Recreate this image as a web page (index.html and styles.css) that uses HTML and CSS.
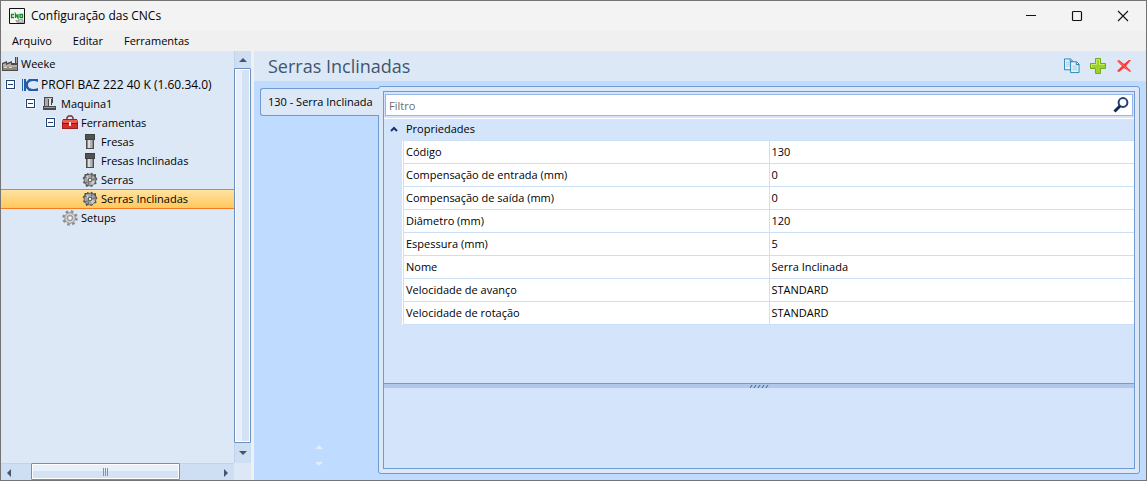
FILE: index.html
```html
<!DOCTYPE html>
<html lang="pt-BR">
<head>
<meta charset="utf-8">
<title>Configuração das CNCs</title>
<link rel="stylesheet" href="styles.css">
</head>
<body>
<svg class="defs" aria-hidden="true">
  <symbol id="mill" viewBox="0 0 16 16">
    <path d="M4 5h8v10H4z" fill="#4d4d4d"/><path d="M5 6h6v8H5z" fill="#8c8c8c"/><path d="M6 6h2v8H6z" fill="#dcdcdc"/><path d="M8 6h2v8H8z" fill="#b5b5b5"/>
    <path d="M3 0h10v6H3z" fill="#3d3f40"/><path d="M4 1h8v4H4z" fill="#505354"/>
  </symbol>
  <symbol id="saw" viewBox="0 0 16 16">
    <path d="M5 1l3 1 2-1.500 1 2 3-.5 0 3 1.500 2-1.500 2 .5 3-3 .5-1.500 2.500-3-1-3 1-.5-3-2.500-1 1-3-1.500-2 2-2 0-2 2.500 0z" fill="#555"/>
    <circle cx="8" cy="8" r="5.600" fill="#a6a6a6"/>
    <path d="M8 8L3 6l2-3zM8 8l5 2-3 3z" fill="#cfcfcf"/><path d="M3 11l2.500-1M10 3l-.5 2.500M13 7l-2.500.5M6 13l.5-2.500M3 5l2 1" stroke="#5e5e5e"/>
    <circle cx="8" cy="8" r="2.300" fill="#5d5d5d"/><circle cx="8" cy="8" r="1.200" fill="#f4f4f4"/>
  </symbol>
</svg>
<div class="window">
  <header class="titlebar">
    <svg class="icon app-icon" viewBox="0 0 16 16"><path d="M.5.5h15v15H.5z" fill="#f5f8f5" stroke="#111"/><path d="M5 6.500H2.500v3H5M6.500 10V6l2.500 4V6M11 10V6.500h2.500v3H11" fill="none" stroke="#128a25" stroke-width="1.300"/><path d="M6 12h3l1-1 4 0 1 4H8z" fill="#a5aaa5"/><path d="M10 13h3" stroke="#eee"/></svg>
    <h1 class="title">Configuração das CNCs</h1>
    <button class="caption" aria-label="Minimizar"><svg viewBox="0 0 12 12"><path d="M1 5.500h10" stroke="#111"/></svg></button>
    <button class="caption" aria-label="Maximizar"><svg viewBox="0 0 12 12"><rect x="1.500" y="1.500" width="9" height="9" rx="1" fill="none" stroke="#111" stroke-width="1.200"/></svg></button>
    <button class="caption" aria-label="Fechar"><svg viewBox="0 0 12 12"><path d="M1 1l10 10M11 1L1 11" stroke="#111" stroke-width="1.100"/></svg></button>
  </header>
  <nav class="menu">
    <button>Arquivo</button><button>Editar</button><button>Ferramentas</button>
  </nav>
  <div class="content">
    <aside class="side">
      <ul class="tree">
        <li class="node root"><svg class="icon" viewBox="0 0 16 16"><path d="M0 15V7l5-2v2l5-2v2h3V1h3v14z" fill="#4d4a47"/><path d="M1 8l3-1v2l5-2v2h6v2H1z" fill="#b2aea6"/><path d="M1 11h14v3H1z" fill="#8c8881"/><path d="M2 11h3v1H2zM7 11h3v1H7z" fill="#ddd"/><path d="M14 1h1v6h-1z" fill="#aaa"/></svg>Weeke</li>
        <li class="node l1 machine"><button class="expander" aria-label="Recolher"></button><svg class="icon" viewBox="0 0 16 16"><path d="M0 2h1v12H0zM2 2h2v3l3-3h9v3c-4-2-10-1-10 3s6 5 10 3v3H7l-3-3v3H2z" fill="#245da5"/></svg>PROFI BAZ 222 40 K (1.60.34.0)</li>
        <li class="node l2"><button class="expander" aria-label="Recolher"></button><svg class="icon" viewBox="0 0 16 16"><path d="M2 1h9v6H9V3H7v7h7v4H1v-4h1z" fill="#4a4a4a"/><path d="M3 2h3v8H3z" fill="#aaa"/><path d="M6 2h4v1H6z" fill="#ccc"/><path d="M2 11h11v1H2z" fill="#999"/><path d="M8 3h1v4H8z" fill="#eee"/><path d="M9 7h1v2H9z" fill="#333"/></svg>Maquina1</li>
        <li class="node l3"><button class="expander" aria-label="Recolher"></button><svg class="icon" viewBox="0 0 16 16"><path d="M5 4V2.500L6.500 1h3L11 2.500V4" fill="none" stroke="#6a3434" stroke-width="1.400"/><path d="M1 4h14l1 3v7H0V7z" fill="#9e1f1d"/><path d="M1 5h14v3H1z" fill="#f05b51"/><path d="M1 9h14v4H1z" fill="#d52e29"/><path d="M0 8h16v1H0z" fill="#71201e"/><path d="M7 7h2v4H7z" fill="#eee"/></svg>Ferramentas</li>
        <li class="node l4"><svg class="icon"><use href="#mill"/></svg>Fresas</li>
        <li class="node l4"><svg class="icon"><use href="#mill"/></svg>Fresas Inclinadas</li>
        <li class="node l4"><svg class="icon"><use href="#saw"/></svg>Serras</li>
        <li class="node l4 selected"><svg class="icon"><use href="#saw"/></svg>Serras Inclinadas</li>
        <li class="node l3b"><svg class="icon" viewBox="0 0 16 16"><circle cx="8" cy="8" r="6.500" fill="none" stroke="#8b8b8b" stroke-width="2.400" stroke-dasharray="2.553 2.553"/><circle cx="8" cy="8" r="5.300" fill="#d2d2d2" stroke="#999"/><circle cx="8" cy="8" r="2.800" fill="#bbb" stroke="#999"/><circle cx="8" cy="8" r="1.500" fill="#f8f8f8"/></svg>Setups</li>
      </ul>
      <div class="vscroll">
        <button class="arrow" aria-label="Rolar para cima"><svg viewBox="0 0 8 4"><path d="M0 4h8L4 0z"/></svg></button>
        <div class="vthumb"></div>
        <button class="arrow last" aria-label="Rolar para baixo"><svg viewBox="0 0 8 4"><path d="M0 0h8L4 4z"/></svg></button>
      </div>
      <div class="hscroll">
        <button class="arrow" aria-label="Rolar para a esquerda"><svg class="tall" viewBox="0 0 4 8"><path d="M4 0v8L0 4z"/></svg></button>
        <div class="htrack"><div class="hthumb"><i></i><i></i><i></i></div></div>
        <button class="arrow" aria-label="Rolar para a direita"><svg class="tall" viewBox="0 0 4 8"><path d="M0 0v8l4-4z"/></svg></button>
      </div>
    </aside>
    <main class="main">
      <div class="head">
        <h2>Serras Inclinadas</h2>
        <button class="tool" aria-label="Copiar"><svg viewBox="0 0 17 16"><path d="M.5.500H7L9.500 3v9h-9z" fill="#e4f3fa" stroke="#2482b8"/><path d="M2 4h5M2 6h5M2 8h5" stroke="#9dcbe1"/><path d="M7 3.500h6.500l2.500 2.500v9H7z" fill="#e4f3fa" stroke="#2482b8"/><path d="M13 4v2.500h3M6.500 1v2h2" fill="none" stroke="#1476ad"/><path d="M9 8h5M9 10h5M9 12h5" stroke="#9dcbe1"/></svg></button>
        <button class="tool" aria-label="Adicionar"><svg viewBox="0 0 16 16"><path d="M5.500.500h5v5h5v5h-5v5h-5v-5h-5v-5h5z" fill="#9bd22b" stroke="#78a91c"/><path d="M6.500 6.500v-5h3v5h5M1.500 9V6.500h5" fill="none" stroke="#c7ec68"/></svg></button>
        <button class="tool" aria-label="Excluir"><svg viewBox="0 0 16 16"><path d="M1 3l2-1 5 4 5-4 2 0-5 6 5 5-1 1-6-4-5 4-2-1 5-5z" fill="#ff3434"/><path d="M2 3l6 5 5 5" fill="none" stroke="#ff6d68"/></svg></button>
      </div>
      <div class="body">
        <div class="tabs">
          <button class="tab">130 - Serra Inclinada</button>
          <div class="pager">
            <svg viewBox="0 0 8 4"><path d="M0 4h8L4 0z"/></svg>
            <svg viewBox="0 0 8 4"><path d="M0 0h8L4 4z"/></svg>
          </div>
        </div>
        <section class="page">
          <div class="grid">
            <label class="filter"><input type="text" placeholder="Filtro" aria-label="Filtro"><svg viewBox="0 0 16 16"><circle cx="10" cy="5.500" r="4.400" fill="none" stroke="#24426f" stroke-width="2"/><path d="M7 9l-5.500 5.500" stroke="#102a56" stroke-width="3"/></svg></label>
            <div class="props">
              <button class="category"><svg viewBox="0 0 8 6"><path d="M1 5l3-3 3 3" fill="none" stroke="#17366b" stroke-width="2"/></svg>Propriedades</button>
              <table>
                <tr><th scope="row">Código</th><td>130</td></tr>
                <tr><th scope="row">Compensação de entrada (mm)</th><td>0</td></tr>
                <tr><th scope="row">Compensação de saída (mm)</th><td>0</td></tr>
                <tr><th scope="row">Diâmetro (mm)</th><td>120</td></tr>
                <tr><th scope="row">Espessura (mm)</th><td>5</td></tr>
                <tr><th scope="row">Nome</th><td>Serra Inclinada</td></tr>
                <tr><th scope="row">Velocidade de avanço</th><td>STANDARD</td></tr>
                <tr><th scope="row">Velocidade de rotação</th><td>STANDARD</td></tr>
              </table>
            </div>
            <div class="splitter"><svg viewBox="0 0 19 3"><path d="M0 3l2-3M4 3l2-3M8 3l2-3M12 3l2-3M16 3l2-3" stroke="#2e69b5"/></svg></div>
            <div class="description"></div>
          </div>
        </section>
      </div>
    </main>
  </div>
</div>
</body>
</html>
```
FILE: styles.css
```css
* { box-sizing: border-box; }
body { margin: 0; font: 11px/16px "Open Sans", "Noto Sans", sans-serif; color: #000; }
button { border: 0; padding: 0; background: none; font: inherit; color: inherit; }
svg { display: block; flex: none; }
.defs { display: none; }
.icon { width: 16px; height: 16px; }
.window { height: 100vh; display: flex; flex-direction: column; border: 1px solid #747474; background: #f0f0f0; }

.titlebar { height: 30px; flex: none; display: flex; align-items: center; background: #f3f3f3; padding-left: 8px; }
.title { flex: 1; margin: 0 0 0 6px; font-size: 12px; font-weight: 400; }
.caption { width: 46px; height: 30px; display: flex; align-items: center; justify-content: center; }
.caption svg { width: 12px; height: 12px; }
.menu { height: 20px; flex: none; display: flex; gap: 21px; padding-left: 11px; }

.content { flex: 1; min-height: 0; display: flex; gap: 3px; }
.side { width: 250px; flex: none; display: grid; grid-template: 1fr 17px / 1fr 17px; background: #dde8f6; }
.tree { margin: 0; padding: 3px 0 0; list-style: none; overflow: hidden; white-space: nowrap; }
.node { height: 19px; display: flex; align-items: center; gap: 3px; }
.root { height: 21px; padding: 0 0 2px 1px; }
.machine { font-size: 12px; }
.l1 { padding-left: 5px; }
.l2 { padding-left: 25px; }
.l3 { padding-left: 45px; }
.l3b { padding-left: 61px; }
.l4 { padding-left: 81px; }
.selected { background: linear-gradient(#ffe3a6, #ffc95c); box-shadow: inset 0 1px #f47b20, 0 1px #f47b20; }
.expander { width: 9px; height: 9px; border: 1px solid #24406f; background: linear-gradient(#24406f, #24406f) center / 5px 1px no-repeat #fff; margin-right: 4px; box-shadow: 0 0 0 1px #eef4fc; }

.vscroll { display: flex; flex-direction: column; background: #cfdff3; border-left: 1px solid #c0d3ec; }
.arrow { width: 16px; height: 17px; flex: none; display: flex; align-items: center; justify-content: center; }
.arrow.last { height: 20px; }
.arrow svg { width: 8px; height: 4px; fill: #46546f; }
.arrow .tall { width: 4px; height: 8px; }
.vthumb { flex: 1; margin-left: -1px; border: 1px solid #6f8fbe; border-radius: 1px; box-shadow: inset 0 0 0 1px #fff; background: linear-gradient(90deg, #e8f1fb 45%, #d3e2f4 45%); }
.hscroll { display: flex; background: #cfdff3; border-top: 1px solid #c0d3ec; }
.htrack { flex: 1; padding-left: 14px; margin-top: -1px; }
.hthumb { width: 149px; height: 17px; display: flex; align-items: center; justify-content: center; gap: 1px; border: 1px solid #6f8fbe; border-radius: 1px; box-shadow: inset 0 0 0 1px #fff; background: linear-gradient(#e8f1fb 48%, #d3e2f4 48%); }
.hthumb i { width: 1px; height: 8px; background: #6f95c9; }

.main { flex: 1; min-width: 0; display: flex; flex-direction: column; background: #bfdbff; }
.head { height: 30px; flex: none; display: flex; align-items: center; gap: 10px; padding: 0 14px; background: #dde8f6; }
.head h2 { flex: 1; margin: 0; font-size: 18px; line-height: 28px; font-weight: 400; color: #405670; }
.tool svg { width: 16px; height: 16px; }
.body { flex: 1; min-height: 0; display: flex; padding: 5px 6px 6px; }
.tabs { width: 118px; flex: none; display: flex; flex-direction: column; justify-content: space-between; align-items: flex-start; padding: 2px 0 8px; }
.tab { position: relative; width: 119px; height: 28px; padding-left: 7px; text-align: left; white-space: nowrap; background: #dde8f6; border: 1px solid #6f9ad3; border-right: 0; border-radius: 3px 0 0 3px; }
.pager { display: flex; flex-direction: column; gap: 13px; align-self: center; }
.pager svg { width: 8px; height: 4px; fill: #e3edfb; }
.page { flex: 1; min-width: 0; display: flex; padding: 4px; background: #dde8f6; border: 1px solid #6f9ad3; border-radius: 3px; }
.grid { flex: 1; min-width: 0; display: flex; flex-direction: column; background: #d4e5fb; border: 1px solid #6f9ad3; }
.filter { height: 22px; flex: none; display: flex; align-items: center; margin: 2px 1px; padding-right: 3px; background: #fff; border: 1px solid #93b7e8; }
.filter input { flex: 1; min-width: 0; height: 20px; border: 0; outline: 0; padding: 0 3px; font: inherit; background: none; }
.filter input::placeholder { color: #6d6d6d; opacity: 1; }
.filter svg { width: 16px; height: 16px; }
.props { flex: 1; min-height: 0; border-top: 1px solid #fff; }
.category { height: 21px; width: 100%; display: flex; align-items: center; gap: 8px; padding: 0 0 2px 6px; }
.category svg { width: 8px; height: 6px; }
.props table { width: calc(100% - 18px); margin-left: 18px; table-layout: fixed; border-spacing: 0; border-left: 1px solid #fff; border-top: 1px solid #cbdff7; }
.props th, .props td { height: 23px; padding: 0 2px; text-align: left; font-weight: 400; background: #fff; border-left: 1px solid #cbdff7; border-bottom: 1px solid #cbdff7; }
.splitter { height: 5px; flex: none; display: flex; justify-content: center; align-items: center; background: #b1c8e8; border-top: 1px solid #759cd1; }
.splitter svg { width: 19px; height: 3px; }
.description { height: 80px; flex: none; }
```
